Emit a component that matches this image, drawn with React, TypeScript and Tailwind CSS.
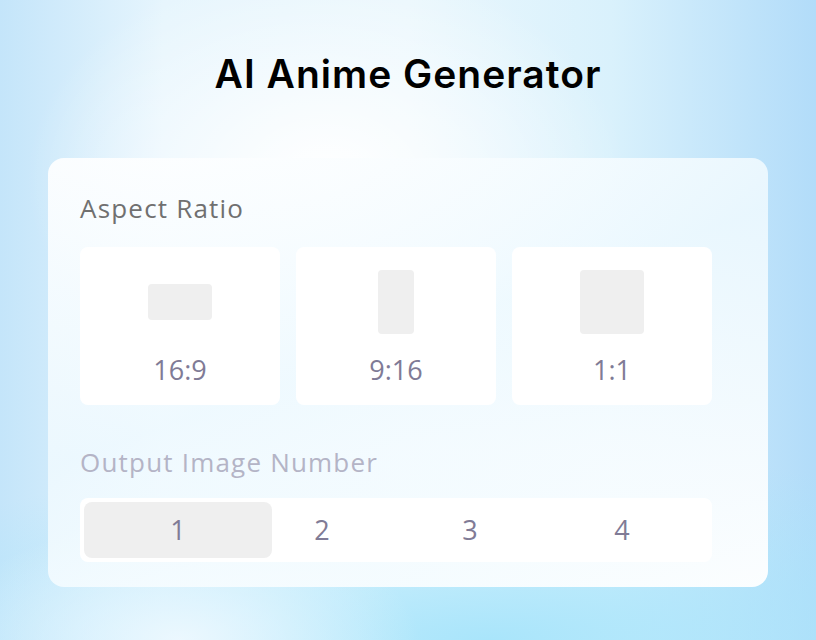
import { useState } from 'react';

type Ratio = {
  label: string;
  w: string;
};

const ratios: Ratio[] = [
  { label: '16:9', w: 'w-16 h-9' },
  { label: '9:16', w: 'w-9 h-16' },
  { label: '1:1', w: 'w-16 h-16' },
];

const counts = [1, 2, 3, 4];

export default function App() {
  const [ratio, setRatio] = useState<string>('');
  const [count, setCount] = useState<number>(1);

  return (
    <div
      className="w-full h-[640px] flex flex-col items-center overflow-hidden bg-[radial-gradient(ellipse_300px_220px_at_40%_28%,rgba(255,255,255,1),rgba(255,255,255,0)),radial-gradient(ellipse_240px_120px_at_22%_100%,rgba(240,249,255,0.9),rgba(240,249,255,0)),radial-gradient(ellipse_700px_190px_at_60%_100%,#a9e5fb,rgba(169,229,251,0)),linear-gradient(90deg,#c4e5fa_0%,#e6f5fd_20%,#eaf7fd_50%,#d9f1fc_75%,#b2dcf9_100%)]"
      style={{ fontFamily: '"Open Sans", "Noto Sans", sans-serif' }}
    >
      <h1
        className="mt-[50px] text-[39px] leading-[48px] font-semibold text-black tracking-[1px]"
        style={{ fontFamily: 'Inter, Roboto, sans-serif' }}
      >
        AI Anime Generator
      </h1>

      <div className="mt-[60px] w-[720px] rounded-2xl bg-[linear-gradient(160deg,rgba(255,255,255,0.9),rgba(240,250,255,0.85)_45%,rgba(255,255,255,0.95))] pl-8 pr-14 pt-[34px] pb-[25px]">
        <h2 className="text-[26px] leading-[32px] text-[#707070] tracking-[1.2px]">Aspect Ratio</h2>

        <div className="mt-[23px] grid grid-cols-3 gap-4">
          {ratios.map((r) => (
            <button
              key={r.label}
              type="button"
              onClick={() => setRatio(r.label)}
              className={`h-[158px] rounded-lg bg-white flex flex-col items-center pt-[23px] ${ratio === r.label ? 'ring-2 ring-sky-300' : ''}`}
            >
              <div className="h-16 w-16 flex items-center justify-center">
                <div className={`${r.w} rounded bg-[#efefef]`} />
              </div>
              <span className="mt-[18px] text-[27px] leading-[36px] text-[#807b96]">{r.label}</span>
            </button>
          ))}
        </div>

        <h2 className="mt-[41px] text-[26px] leading-[32px] text-[#b4b4c6] tracking-[1.2px]">Output Image Number</h2>

        <div className="mt-[20px] h-16 rounded-lg bg-white p-1 flex">
          {counts.map((n) => (
            <button
              key={n}
              type="button"
              onClick={() => setCount(n)}
              className={`h-[56px] rounded-lg text-[27px] text-[#807b96] ${n === 1 ? 'w-[188px]' : n === 2 ? 'w-[100px]' : n === 3 ? 'w-[196px]' : 'w-[108px]'} ${count === n ? 'bg-[#efefef]' : ''}`}
            >
              {n}
            </button>
          ))}
        </div>
      </div>
    </div>
  );
}
